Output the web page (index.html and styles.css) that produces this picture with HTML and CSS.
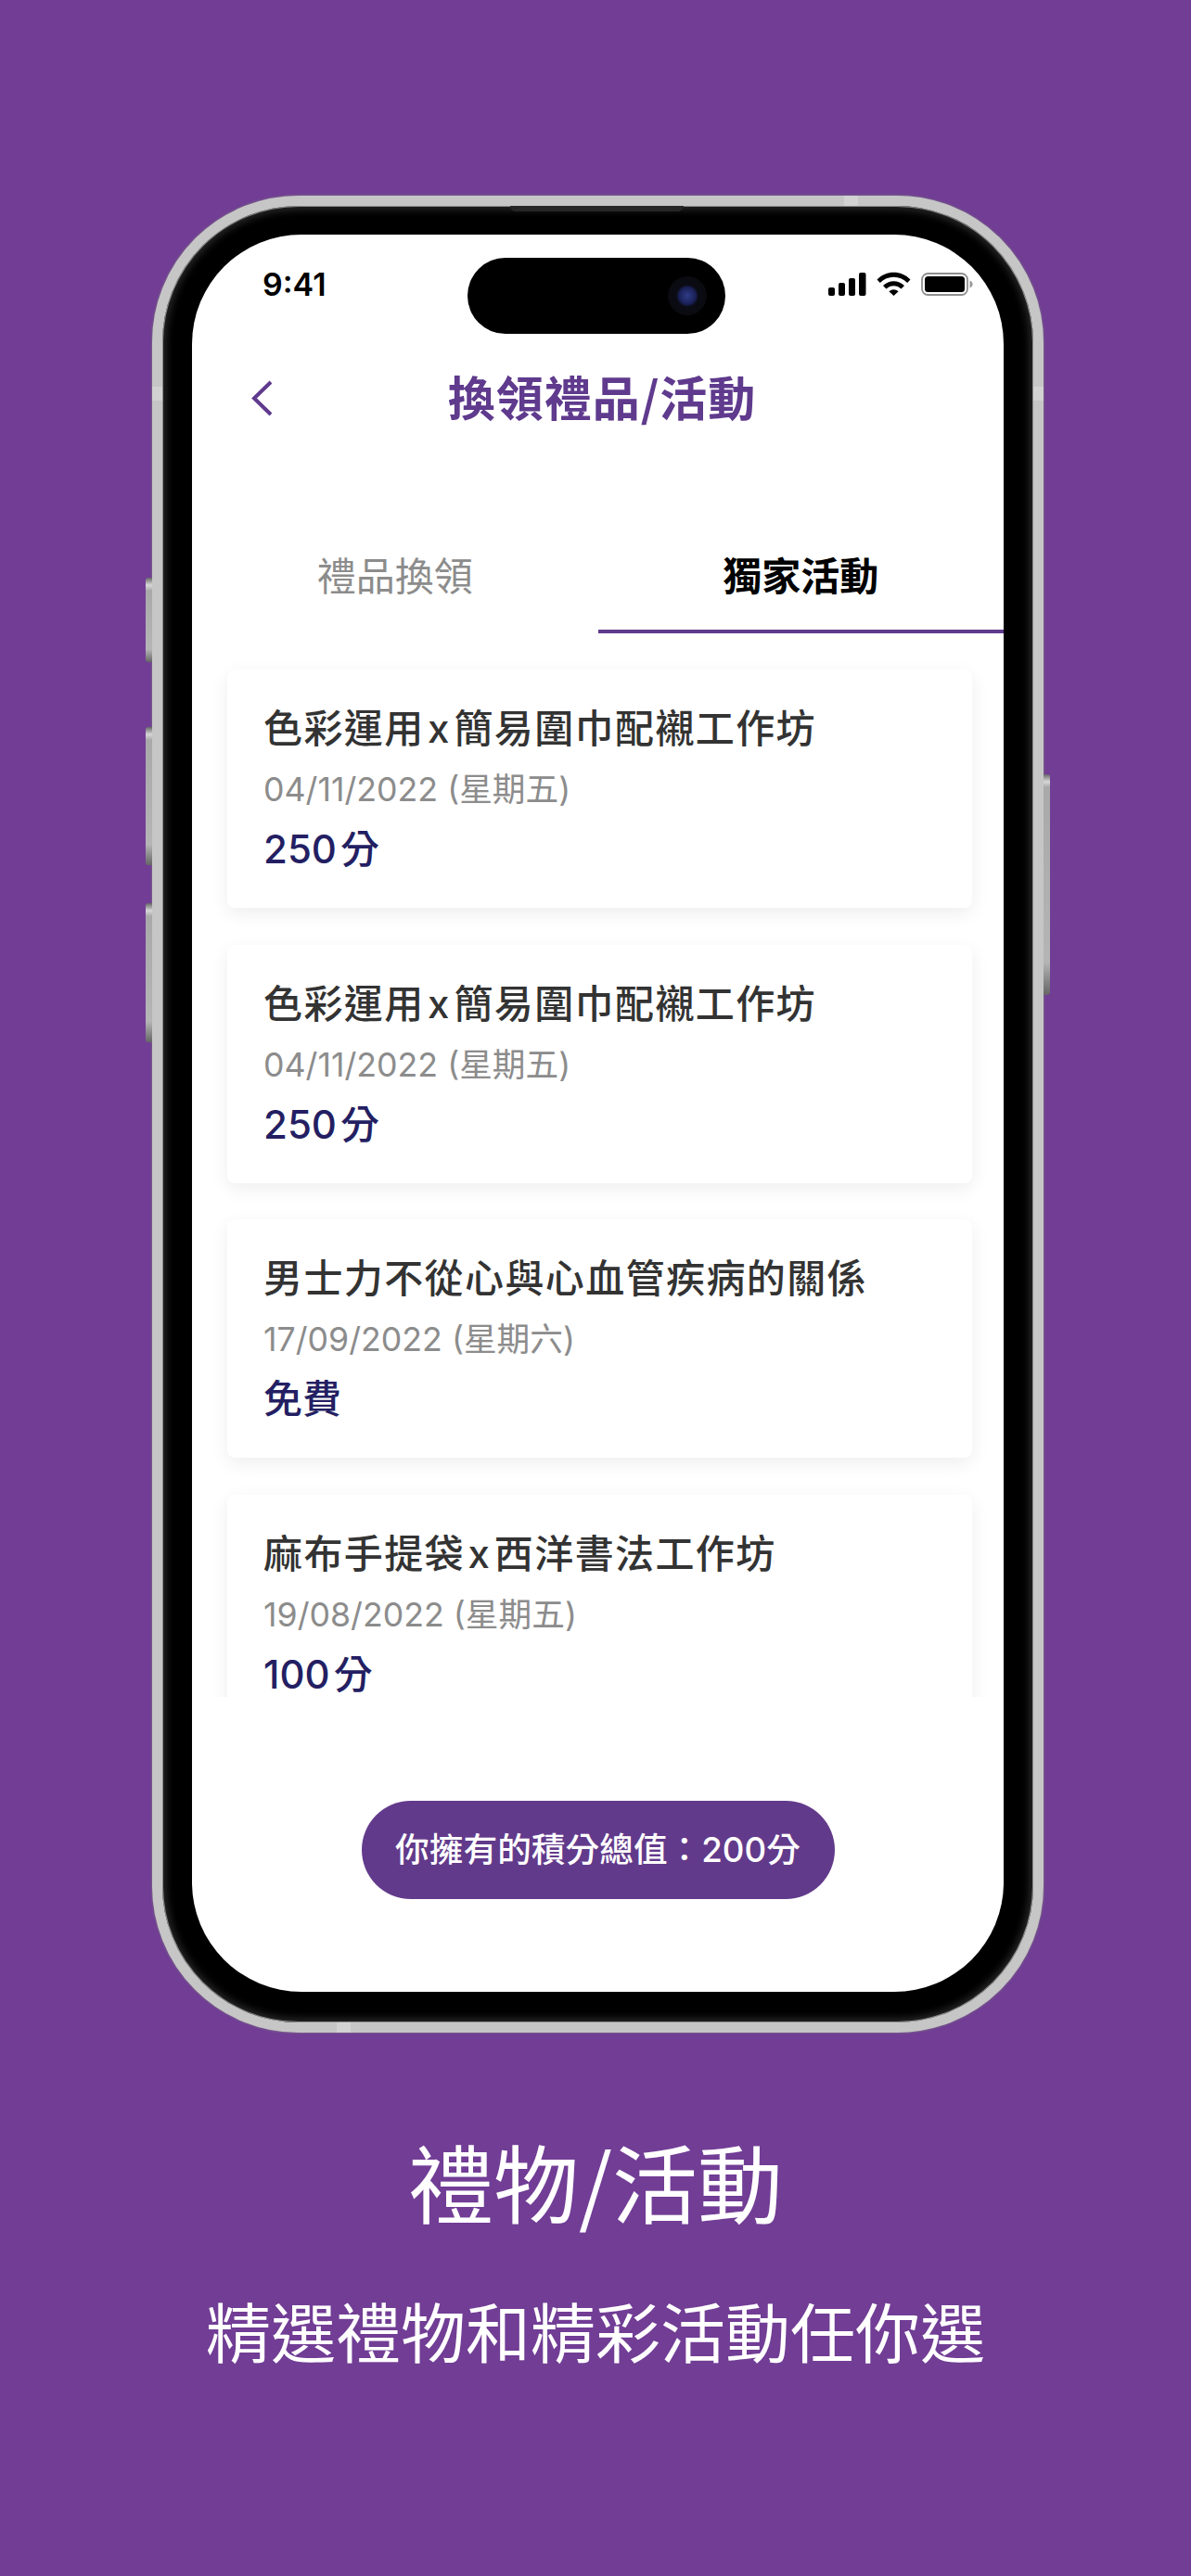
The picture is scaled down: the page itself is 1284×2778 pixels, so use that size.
FILE: index.html
```html
<!DOCTYPE html>
<html lang="zh-Hant">
<head>
    <meta charset="UTF-8">
    <title>禮物/活動</title>
    <link rel="stylesheet" href="styles.css">
</head>
<body>
    <div class="phone">
        <span class="side-btn btn-mute"></span>
        <span class="side-btn btn-up"></span>
        <span class="side-btn btn-down"></span>
        <span class="side-btn btn-power"></span>
        <span class="band band-left"></span>
        <span class="band band-right"></span>
        <span class="band band-top"></span>
        <span class="band band-bottom"></span>
        <span class="speaker"></span>

        <div class="screen">
            <div class="island"><span class="camera"></span></div>

            <div class="status-bar">
                <span class="time">9:41</span>
                <div class="status-icons">
                    <svg class="ic-signal" width="41" height="25" viewBox="0 0 41 25">
                        <rect x="0" y="16" width="7" height="9" rx="2"/>
                        <rect x="11" y="11" width="7" height="14" rx="2"/>
                        <rect x="22" y="6" width="7" height="19" rx="2"/>
                        <rect x="33" y="0" width="7.5" height="25" rx="2"/>
                    </svg>
                    <svg class="ic-wifi" width="37" height="26" viewBox="0 0 37 26">
                        <path d="M0.5 8.5 C10.5 -1.8 26.5 -1.8 36.5 8.5 L33.2 12 C25 3.6 12 3.6 3.8 12 Z"/>
                        <path d="M7 15 C13.5 8.5 23.5 8.5 30 15 L26.6 18.5 C22 14 15 14 10.4 18.5 Z"/>
                        <path d="M13.4 21.3 C16.3 18.6 20.7 18.6 23.6 21.3 L18.5 26 Z"/>
                    </svg>
                    <svg class="ic-battery" width="56" height="25" viewBox="0 0 56 25">
                        <rect x="1" y="1" width="49" height="23" rx="6.5" fill="none" stroke="#8f8f8f" stroke-width="1.8"/>
                        <rect x="4" y="4" width="43" height="17" rx="3.5"/>
                        <path d="M52.5 8.5 C54.5 9.2 55.6 10.7 55.6 12.5 C55.6 14.3 54.5 15.8 52.5 16.5 Z" fill="#9a9a9a"/>
                    </svg>
                </div>
            </div>

            <header class="top-bar">
                <svg class="back" width="24" height="39" viewBox="0 0 24 39">
                    <path d="M21 2 L3 19.5 L21 37" fill="none" stroke="#5f3a8d" stroke-width="4"/>
                </svg>
                <h1>換領禮品/活動</h1>
            </header>

            <nav class="tabs">
                <div class="tab">禮品換領</div>
                <div class="tab tab-on">獨家活動</div>
            </nav>

            <div class="list">
                <div class="card">
                    <p class="card-title">色彩運用<span class="x">x</span>簡易圍巾配襯工作坊</p>
                    <p class="card-date">04/11/2022 (星期五)</p>
                    <p class="card-price">250<span class="unit">分</span></p>
                </div>
                <div class="card">
                    <p class="card-title">色彩運用<span class="x">x</span>簡易圍巾配襯工作坊</p>
                    <p class="card-date">04/11/2022 (星期五)</p>
                    <p class="card-price">250<span class="unit">分</span></p>
                </div>
                <div class="card">
                    <p class="card-title">男士力不從心與心血管疾病的關係</p>
                    <p class="card-date">17/09/2022 (星期六)</p>
                    <p class="card-price">免費</p>
                </div>
                <div class="card">
                    <p class="card-title">麻布手提袋<span class="x">x</span>西洋書法工作坊</p>
                    <p class="card-date">19/08/2022 (星期五)</p>
                    <p class="card-price">100<span class="unit">分</span></p>
                </div>
            </div>

            <div class="bottom">
                <div class="pill">你擁有的積分總值：200分</div>
            </div>
        </div>
    </div>

    <div class="caption">
        <h2>禮物/活動</h2>
        <p>精選禮物和精彩活動任你選</p>
    </div>
</body>
</html>
```

FILE: styles.css
```css
* {
    box-sizing: border-box;
}

html, body {
    margin: 0;
    padding: 0;
}

body {
    width: 1284px;
    height: 2778px;
    padding-top: 211px;
    overflow: hidden;
    background: #713d95;
    font-family: Inter, "Noto Sans CJK TC", sans-serif;
}

p, h1, h2 {
    margin: 0;
    font-weight: 400;
}

/******************* phone frame *******************/

.phone {
    position: relative;
    width: 961px;
    height: 1981px;
    margin-left: 164px;
    padding: 31px 32px 33px 32px;
    border: 11px solid #c6c6c6;
    border-radius: 158px;
    background: #000;
    box-shadow: 0 0 3px #7f7f7f, inset 0 0 0 1px #8a8a8a, inset 0 0 9px 4px #2a2a2a;
}

.side-btn {
    position: absolute;
    width: 7px;
    border-radius: 3px 0 0 3px;
    background: linear-gradient(#666 0, #d8d8d8 8px, #a9a9a9 14px, #b5b5b5 85%, #666 100%);
}

.btn-mute {
    left: -18px;
    top: 401px;
    height: 91px;
}

.btn-up {
    left: -18px;
    top: 562px;
    height: 149px;
}

.btn-down {
    left: -18px;
    top: 752px;
    height: 150px;
}

.btn-power {
    right: -18px;
    top: 613px;
    height: 238px;
    border-radius: 0 3px 3px 0;
}

/* thin antenna lines on the metal edge */
.band {
    position: absolute;
    background: #d2d2d2;
}

.band-left {
    left: -11px;
    top: 195px;
    width: 11px;
    height: 15px;
}

.band-right {
    right: -11px;
    top: 195px;
    width: 11px;
    height: 15px;
}

.band-top {
    left: 735px;
    top: -11px;
    width: 15px;
    height: 11px;
}

.band-bottom {
    left: 188px;
    bottom: -11px;
    width: 15px;
    height: 11px;
}

.speaker {
    position: absolute;
    left: 375px;
    top: 0;
    width: 187px;
    height: 6px;
    border-radius: 0 0 6px 6px;
    background: #262626;
}

/******************* screen *******************/

.screen {
    position: relative;
    display: flex;
    flex-direction: column;
    height: 100%;
    border-radius: 118px;
    background: #fff;
    overflow: hidden;
}

.island {
    position: absolute;
    left: 297px;
    top: 25px;
    display: flex;
    align-items: center;
    justify-content: flex-end;
    width: 278px;
    height: 82px;
    padding-right: 20px;
    border-radius: 41px;
    background: #000;
}

.camera {
    width: 42px;
    height: 42px;
    border-radius: 50%;
    background: radial-gradient(circle, #2f3c86 0, #1a2056 9px, #0b0b14 12px, #0a0a10 21px);
}

.status-bar {
    display: flex;
    align-items: center;
    justify-content: space-between;
    height: 106px;
    padding: 0 33px 0 76px;
}

.time {
    font-size: 34px;
    font-weight: 600;
    color: #000;
}

.status-icons {
    display: flex;
    align-items: center;
    gap: 11px;
}

/******************* header *******************/

.top-bar {
    position: relative;
    height: 128px;
    padding: 34px 0 0 9px;
    text-align: center;
    font-family: "Noto Sans CJK TC", sans-serif;
}

.back {
    position: absolute;
    left: 64px;
    top: 51px;
}

.top-bar h1 {
    font-size: 51px;
    line-height: 68px;
    letter-spacing: 1px;
    font-weight: 700;
    color: #5f3a8d;
}

/******************* tabs *******************/

.tabs {
    display: flex;
    height: 197px;
    padding-top: 97px;
    margin-top: -1px;
}

.tab {
    flex: 1;
    height: 100px;
    padding-top: 10px;
    font-size: 42px;
    line-height: 58px;
    text-align: center;
    color: #8c8c8c;
}

.tab-on {
    font-weight: 700;
    color: #000;
    border-bottom: 4px solid #5f3a8d;
}

/******************* list *******************/

.list {
    display: flex;
    flex-direction: column;
    gap: 39.5px;
    height: 1147px;
    padding: 39px 34px 0 38px;
    overflow: hidden;
}

.card {
    flex: none;
    height: 257px;
    padding: 35px 39px 0 39px;
    border-radius: 8px;
    background: #fff;
    box-shadow: 0 6px 20px rgba(0, 0, 0, 0.07);
}

.card-title {
    font-size: 42px;
    line-height: 58px;
    letter-spacing: 1.4px;
    font-weight: 500;
    color: #333;
}

.x {
    margin: 0 3.5px;
}

.card-date {
    margin-top: 7px;
    font-size: 35.7px;
    line-height: 58px;
    color: #8c8c8c;
}

.card-price {
    margin-top: 7px;
    font-size: 42px;
    line-height: 58px;
    font-weight: 500;
    color: #241f63;
}

.unit {
    margin-left: 4px;
}

/******************* bottom *******************/

.bottom {
    display: flex;
    justify-content: center;
    padding-top: 112px;
}

.pill {
    width: 510px;
    height: 106px;
    border-radius: 53px;
    font-size: 36.7px;
    font-weight: 500;
    line-height: 105px;
    text-align: center;
    color: #fff;
    background: #623a8b;
}

/******************* caption *******************/

.caption {
    margin-top: 93px;
    text-align: center;
    color: #fff;
    font-family: "Noto Sans CJK TC", sans-serif;
}

.caption h2 {
    font-size: 92px;
    line-height: 132px;
}

.caption p {
    margin-top: 46px;
    font-size: 70px;
    line-height: 100px;
}
```
